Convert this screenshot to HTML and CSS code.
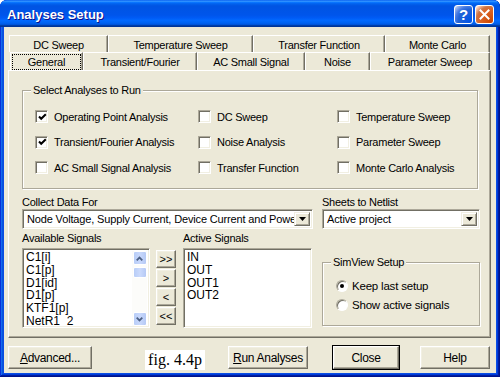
FILE: index.html
```html
<!DOCTYPE html>
<html>
<head>
<meta charset="utf-8">
<link rel="stylesheet" href="styles.css">
</head>
<body>
<div class="window">
  <div class="titlebar">
    <span class="title">Analyses Setup</span>
    <div class="tbtns">
      <span class="tb tb-help">?</span>
      <span class="tb tb-close"><svg width="11" height="11" viewBox="0 0 11 11"><path d="M1.5 1.5 L9.5 9.5 M9.5 1.5 L1.5 9.5" stroke="#fff" stroke-width="2" stroke-linecap="square"/></svg></span>
    </div>
  </div>
  <div class="client">
    <div class="tabrow back">
      <div class="tab t-dc">DC Sweep</div>
      <div class="tab t-temp">Temperature Sweep</div>
      <div class="tab t-tf">Transfer Function</div>
      <div class="tab t-mc">Monte Carlo</div>
    </div>
    <div class="tabrow front">
      <div class="tab t-gen selected"><span class="focus">General</span></div>
      <div class="tab t-tr">Transient/Fourier</div>
      <div class="tab t-ac">AC Small Signal</div>
      <div class="tab t-noise">Noise</div>
      <div class="tab t-ps">Parameter Sweep</div>
    </div>
    <div class="panel">
      <div class="group analyses">
        <div class="legend">Select Analyses to Run</div>
        <div class="checks">
          <div class="chk"><span class="box"><svg width="9" height="9" viewBox="0 0 9 9"><polyline points="1,3.5 3.2,5.8 7.8,1.2" fill="none" stroke="#000" stroke-width="2"/></svg></span>Operating Point Analysis</div>
          <div class="chk"><span class="box"></span>DC Sweep</div>
          <div class="chk"><span class="box"></span>Temperature Sweep</div>
          <div class="chk"><span class="box"><svg width="9" height="9" viewBox="0 0 9 9"><polyline points="1,3.5 3.2,5.8 7.8,1.2" fill="none" stroke="#000" stroke-width="2"/></svg></span>Transient/Fourier Analysis</div>
          <div class="chk"><span class="box"></span>Noise Analysis</div>
          <div class="chk"><span class="box"></span>Parameter Sweep</div>
          <div class="chk"><span class="box"></span>AC Small Signal Analysis</div>
          <div class="chk"><span class="box"></span>Transfer Function</div>
          <div class="chk"><span class="box"></span>Monte Carlo Analysis</div>
        </div>
      </div>
      <div class="combos">
        <div class="field f-collect">
          <div class="lbl">Collect Data For</div>
          <div class="combo"><span class="ctext">Node Voltage, Supply Current, Device Current and Power</span><span class="cbtn"><svg width="7" height="4" viewBox="0 0 7 4"><path d="M0 0 H7 L3.5 4 Z" fill="#000"/></svg></span></div>
        </div>
        <div class="field f-sheets">
          <div class="lbl">Sheets to Netlist</div>
          <div class="combo"><span class="ctext">Active project</span><span class="cbtn"><svg width="7" height="4" viewBox="0 0 7 4"><path d="M0 0 H7 L3.5 4 Z" fill="#000"/></svg></span></div>
        </div>
      </div>
      <div class="signals">
        <div class="col avail">
          <div class="lbl">Available Signals</div>
          <div class="listbox">
            <div class="items">
              <div>C1[i]</div><div>C1[p]</div><div>D1[id]</div><div>D1[p]</div><div>KTF1[p]</div><div>NetR1_2</div>
            </div>
            <div class="vscroll">
              <span class="sb-btn"><svg width="7" height="5" viewBox="0 0 7 5"><path d="M0.7 4.3 L3.5 1.5 L6.3 4.3" fill="none" stroke="#4D6185" stroke-width="1.8"/></svg></span>
              <span class="sb-thumb"></span>
              <span class="sb-btn down"><svg width="7" height="5" viewBox="0 0 7 5"><path d="M0.7 0.7 L3.5 3.5 L6.3 0.7" fill="none" stroke="#4D6185" stroke-width="1.8"/></svg></span>
            </div>
          </div>
        </div>
        <div class="movebtns">
          <span class="mbtn">&gt;&gt;</span>
          <span class="mbtn">&gt;</span>
          <span class="mbtn">&lt;</span>
          <span class="mbtn">&lt;&lt;</span>
        </div>
        <div class="col active">
          <div class="lbl">Active Signals</div>
          <div class="listbox">
            <div class="items">
              <div>IN</div><div>OUT</div><div>OUT1</div><div>OUT2</div>
            </div>
          </div>
        </div>
        <div class="group simview">
          <div class="legend">SimView Setup</div>
          <div class="radios">
            <div class="rad"><span class="radio on"></span>Keep last setup</div>
            <div class="rad"><span class="radio"></span>Show active signals</div>
          </div>
        </div>
      </div>
    </div>
    <div class="bottom">
      <span class="btn b-adv"><u>A</u>dvanced...</span>
      <span class="fig">fig. 4.4p</span>
      <span class="btn b-run"><u>R</u>un Analyses</span>
      <span class="btn b-close">Close</span>
      <span class="btn b-help">Help</span>
    </div>
  </div>
</div>
</body>
</html>
```
FILE: styles.css
```css
html, body {
  margin: 0;
  padding: 0;
  background: #fff;
}
body {
  width: 500px;
  height: 377px;
  overflow: hidden;
  font-family: "Liberation Sans", Arial, sans-serif;
  font-size: 11px;
  letter-spacing: -0.25px;
  color: #000;
}
.window {
  width: 500px;
  height: 377px;
  box-sizing: border-box;
  display: flex;
  flex-direction: column;
  padding: 0 4px 4px;
  background: #0A4EE4;
  border-radius: 7px 7px 0 0;
  box-shadow: inset -1px -1px #00138c, inset 1px 1px #0831d9, inset -2px -2px #001ea0, inset 2px 2px #166aee, inset -3px -3px #003bda, inset 3px 3px #0855dd;
}
.titlebar {
  height: 27px;
  margin: 0 -4px;
  padding: 0 6px 0 7px;
  display: flex;
  align-items: center;
  border-radius: 7px 7px 0 0;
  background: linear-gradient(to bottom, #0058ee 0%, #3593ff 4%, #288eff 6%, #127dff 8%, #036ffc 10%, #0262ee 14%, #0057e5 20%, #0054e3 24%, #0055eb 56%, #005bf5 66%, #026afe 76%, #0062ef 86%, #0052d6 92%, #0040ab 94%, #003092 100%);
}
.title {
  flex: 1;
  color: #fff;
  font-weight: bold;
  font-size: 13px;
  letter-spacing: 0;
  text-shadow: 1px 1px #0f1089;
  padding-top: 1px;
}
.tbtns {
  display: flex;
  gap: 2px;
  margin-top: 2px;
}
.tb {
  width: 19px;
  height: 19px;
  box-sizing: border-box;
  border: 1px solid #fff;
  border-radius: 3px;
  display: flex;
  align-items: center;
  justify-content: center;
}
.tb-help {
  background: radial-gradient(circle at 90% 90%, #0054e9 0%, #2263d5 55%, #4479e4 70%, #a3bbec 90%, #fff 100%);
  color: #fff;
  font-weight: bold;
  font-size: 15px;
  letter-spacing: 0;
}
.tb-close {
  background: radial-gradient(circle at 90% 90%, #cc4600 0%, #dc6527 55%, #cd7546 70%, #ffccb2 90%, #fff 100%);
}
.client {
  flex: 1;
  background: #ECE9D8;
  padding-top: 8px;
  display: flex;
  flex-direction: column;
}
.tabrow {
  display: flex;
}
.tabrow.back {
  margin-left: 5px;
  height: 17px;
}
.tabrow.front {
  margin-left: 6px;
  height: 18px;
}
.tab {
  box-sizing: border-box;
  display: flex;
  align-items: center;
  justify-content: center;
  border-top: 1px solid #fff;
  border-left: 1px solid #fff;
  border-right: 1px solid #716F64;
  box-shadow: inset -1px 0 #ACA899;
  padding-top: 1px;
}
.t-dc { width: 99px; }
.t-temp { width: 145px; }
.t-tf { width: 132px; }
.t-mc { width: 105px; }
.t-gen { width: 73px; }
.t-tr { width: 114px; }
.t-ac { width: 108px; }
.t-noise { width: 65px; }
.t-ps { width: 120px; }
.tab.selected {
  padding: 1px 1px 0 1px;
  align-items: stretch;
}
.focus {
  flex: 1;
  border: 1px dotted #000;
  display: flex;
  align-items: center;
  justify-content: center;
}
.panel {
  margin-left: 4px;
  width: 483px;
  height: 268px;
  box-sizing: border-box;
  border-top: 1px solid #fff;
  border-left: 1px solid #fff;
  border-right: 1px solid #716F64;
  border-bottom: 1px solid #716F64;
  box-shadow: inset -1px -1px #ACA899;
  padding: 19px 0 0 13px;
}
.group {
  box-sizing: border-box;
  border: 1px solid #ACA899;
  box-shadow: inset 1px 1px #fff, 1px 1px #fff;
}
.legend {
  margin-top: -7px;
  margin-left: 8px;
  padding: 0 2px;
  background: #ECE9D8;
  width: max-content;
  line-height: 13px;
}
.analyses {
  width: 456px;
  height: 99px;
}
.checks {
  display: grid;
  grid-template-columns: 163px 139px 1fr;
  grid-auto-rows: 25.5px;
  padding: 7px 0 0 12px;
}
.chk {
  display: flex;
  align-items: center;
}
.box {
  width: 13px;
  height: 13px;
  box-sizing: border-box;
  background: #fff;
  border: 1px solid;
  border-color: #ACA899 #fff #fff #ACA899;
  box-shadow: inset 1px 1px #716F64, inset -1px -1px #F1EFE2;
  margin-right: 6px;
  display: flex;
  align-items: center;
  justify-content: center;
  padding: 1px 0 0 1px;
}
.combos {
  display: flex;
  margin-top: 7px;
}
.lbl {
  line-height: 13px;
}
.f-collect {
  width: 291px;
}
.f-sheets {
  width: 158px;
  margin-left: 9px;
}
.combo {
  height: 20px;
  box-sizing: border-box;
  border: 1px solid;
  border-color: #ACA899 #fff #fff #ACA899;
  box-shadow: inset 1px 1px #716F64, inset -1px -1px #F1EFE2;
  background: #fff;
  display: flex;
  padding: 2px;
}
.ctext {
  flex: 1;
  overflow: hidden;
  white-space: nowrap;
  line-height: 15px;
  padding-left: 2px;
  letter-spacing: -0.15px;
}
.cbtn {
  width: 16px;
  box-sizing: border-box;
  background: #ECE9D8;
  border: 1px solid;
  border-color: #F1EFE2 #716F64 #716F64 #F1EFE2;
  box-shadow: inset 1px 1px #fff, inset -1px -1px #ACA899;
  display: flex;
  align-items: center;
  justify-content: center;
}
.signals {
  display: flex;
  margin-top: 3px;
  align-items: flex-start;
}
.col .lbl {
  margin-bottom: 3px;
}
.listbox {
  height: 80px;
  box-sizing: border-box;
  border: 1px solid;
  border-color: #ACA899 #fff #fff #ACA899;
  box-shadow: inset 1px 1px #716F64, inset -1px -1px #F1EFE2;
  background: #fff;
  display: flex;
  padding: 2px 2px 1px 2px;
  overflow: hidden;
}
.avail { width: 128px; }
.active { width: 129px; margin-left: 7px; }
.items {
  flex: 1;
  font-size: 12px;
  letter-spacing: 0;
  line-height: 12.8px;
  padding-left: 1px;
  overflow: hidden;
  white-space: nowrap;
}
.vscroll {
  width: 15px;
  display: flex;
  flex-direction: column;
  align-items: center;
  background: #FCFCFA;
}
.sb-btn {
  width: 14px;
  height: 14px;
  box-sizing: border-box;
  border: 1px solid #fff;
  border-radius: 2px;
  background: linear-gradient(to right, #b8cdf7, #c8d8fc 50%, #b5c9f5);
  display: flex;
  align-items: center;
  justify-content: center;
}
.sb-btn.down {
  margin-top: auto;
}
.sb-thumb {
  width: 14px;
  height: 11px;
  box-sizing: border-box;
  margin-top: 2px;
  border: 1px solid #fff;
  border-radius: 2px;
  background: linear-gradient(to right, #b8cdf7, #cbdafc 50%, #b5c9f5);
}
.movebtns {
  display: flex;
  flex-direction: column;
  gap: 1px;
  margin: 18px 0 0 6px;
}
.mbtn {
  width: 20px;
  height: 18px;
  box-sizing: border-box;
  background: #ECE9D8;
  border: 1px solid;
  border-color: #fff #716F64 #716F64 #fff;
  box-shadow: inset -1px -1px #ACA899, inset 1px 1px #F1EFE2;
  display: flex;
  align-items: center;
  justify-content: center;
  font-size: 11px;
  letter-spacing: 0;
}
.simview {
  width: 158px;
  height: 64px;
  margin: 30px 0 0 10px;
}
.radios {
  padding: 7px 0 0 13px;
  display: grid;
  grid-auto-rows: 19px;
}
.rad {
  display: flex;
  align-items: center;
  font-size: 11.5px;
  letter-spacing: -0.2px;
}
.radio {
  width: 12px;
  height: 12px;
  box-sizing: border-box;
  border-radius: 50%;
  background: #fff;
  border: 1px solid;
  border-color: #ACA899 #fff #fff #ACA899;
  box-shadow: inset 1px 1px #716F64;
  margin-right: 4px;
  display: flex;
  align-items: center;
  justify-content: center;
}
.radio.on::after {
  content: "";
  width: 4px;
  height: 4px;
  border-radius: 50%;
  background: #000;
}
.bottom {
  display: flex;
  align-items: flex-start;
  margin-top: 8px;
  padding-left: 4px;
}
.btn {
  height: 23px;
  box-sizing: border-box;
  background: #ECE9D8;
  border: 1px solid;
  border-color: #fff #716F64 #716F64 #fff;
  box-shadow: inset -1px -1px #ACA899, inset 1px 1px #F1EFE2;
  display: flex;
  align-items: center;
  justify-content: center;
  font-size: 12px;
  letter-spacing: -0.3px;
}
.b-adv { width: 84px; }
.fig {
  margin: 4px 0 0 53px;
  width: 60px;
  height: 20px;
  background: #fff;
  font-family: "Liberation Serif", "Times New Roman", serif;
  font-size: 16px;
  letter-spacing: 0;
  line-height: 20px;
  text-align: center;
}
.b-run { width: 80px; margin-left: 23px; }
.b-close {
  width: 66px;
  margin-left: 25px;
  outline: 1px solid #000;
  outline-offset: 0;
}
.b-help { width: 70px; margin-left: 21px; }
```
